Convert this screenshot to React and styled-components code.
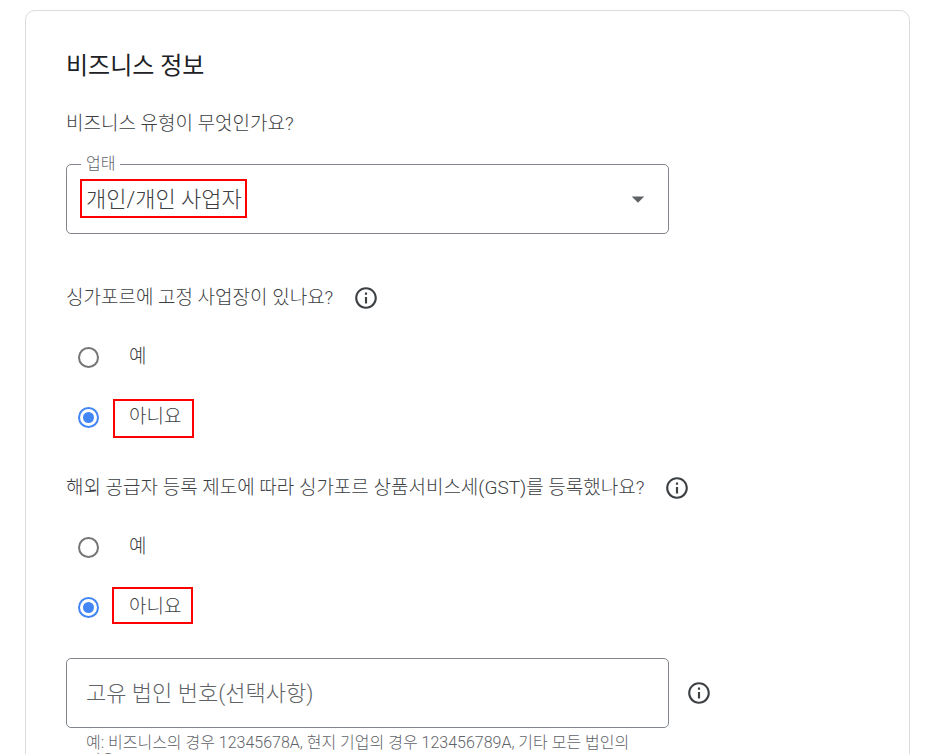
import React, { useState } from "react";
import styled, { createGlobalStyle } from "styled-components";

import { MdArrowDropDown, MdInfoOutline } from "react-icons/md";

const GlobalStyle = createGlobalStyle`
  * {
    box-sizing: border-box;
  }

  body {
    margin: 0;
    background-color: white;
    color: #3c4043;
    font-family: Roboto, "Noto Sans CJK KR Light", "Noto Sans CJK KR", sans-serif;
    font-weight: 350;
    word-break: keep-all;
  }
`;

const Page = styled.main`
  padding: 10px 22px 24px 25px;
`;

const Card = styled.form`
  padding: 37px 40px 40px;
  border: 1px solid #dadce0;
  border-radius: 10px;
`;

const Title = styled.h1`
  margin: 0;
  color: #202124;
  font-family: Roboto, "Noto Sans CJK KR", sans-serif;
  font-size: 24px;
  font-weight: 400;
  line-height: 36px;
`;

const Question = styled.div`
  display: flex;
  align-items: center;
  gap: 20px;
  min-height: 30px;
  font-size: 19px;
  line-height: 30px;
`;

const Intro = styled(Question)`
  margin: 25px 0;
`;

const Group = styled.fieldset`
  min-width: 0;
  margin: ${(props) => props.$space} 0 0;
  padding: 0;
  border: 0;
`;

const Options = styled.div`
  margin-top: 14px;
`;

const InfoButton = styled.button`
  display: flex;
  flex: none;
  padding: 0;
  border: 0;
  background: none;
  color: #3c4043;
  font-size: 26px;
  cursor: pointer;
`;

const Option = styled.label`
  display: flex;
  align-items: center;
  gap: 30px;
  height: 60px;
  padding-left: 12px;
  font-size: 19px;
  line-height: 30px;
  cursor: pointer;
`;

const Radio = styled.input`
  appearance: none;
  flex: none;
  width: 21px;
  height: 21px;
  margin: 0;
  padding: 3px;
  border: 2px solid #757575;
  border-radius: 50%;

  &:checked {
    border-color: #4285f4;
    background: #4285f4 content-box;
  }
`;

const Marked = styled.span`
  position: relative;
`;

const Mark = styled.span`
  position: absolute;
  inset: ${(props) => props.$inset};
  border: 2px solid #ff0000;
  pointer-events: none;
`;

const SelectMark = styled(Mark)`
  width: 167px;
  height: 39px;
`;

const FieldRow = styled.div`
  display: flex;
  align-items: center;
  gap: 17px;
  margin-top: 21px;
`;

const Field = styled.div`
  position: relative;
  width: 603px;
  max-width: 100%;
  height: 70px;
`;

const FloatingLabel = styled.label`
  position: absolute;
  top: -10px;
  left: 15px;
  padding: 0 5px;
  background-color: white;
  color: #5f6368;
  font-size: 16px;
  line-height: 20px;
`;

const Select = styled.select`
  appearance: none;
  width: 100%;
  height: 100%;
  padding: 0 50px 0 19px;
  border: 1px solid #80868b;
  border-radius: 5px;
  background-color: white;
  color: #3c4043;
  font: inherit;
  font-size: 22px;
`;

const Arrow = styled(MdArrowDropDown)`
  position: absolute;
  top: 20px;
  right: 16px;
  color: #5f6368;
  font-size: 30px;
  pointer-events: none;
`;

const TextInput = styled.input`
  width: 100%;
  height: 100%;
  padding: 0 19px;
  border: 1px solid #80868b;
  border-radius: 5px;
  color: #3c4043;
  font: inherit;
  font-size: 22px;

  &::placeholder {
    color: #5f6368;
    opacity: 1;
  }
`;

const Helper = styled.p`
  width: 603px;
  max-width: 100%;
  margin: 6px 0 0;
  padding: 0 20px;
  color: #5f6368;
  font-size: 16px;
  line-height: 18px;
`;

function Info() {
  return (
    <InfoButton type="button" aria-label="자세히 알아보기">
      <MdInfoOutline />
    </InfoButton>
  );
}

function YesNo({ name, question, space, markInset }) {
  const [value, setValue] = useState("no");
  return (
    <Group $space={space} aria-labelledby={`${name}-question`}>
      <Question>
        <span id={`${name}-question`}>{question}</span>
        <Info />
      </Question>
      <Options>
        <Option>
          <Radio type="radio" name={name} checked={value === "yes"} onChange={() => setValue("yes")} />
          <span>예</span>
        </Option>
        <Option>
          <Radio type="radio" name={name} checked={value === "no"} onChange={() => setValue("no")} />
          <Marked>
            아니요
            <Mark $inset={markInset} />
          </Marked>
        </Option>
      </Options>
    </Group>
  );
}

function App() {
  return (
    <Page>
      <GlobalStyle />
      <Card>
        <Title>비즈니스 정보</Title>
        <Intro>비즈니스 유형이 무엇인가요?</Intro>
        <Field>
          <Select id="business-type" defaultValue="individual">
            <option value="individual">개인/개인 사업자</option>
          </Select>
          <FloatingLabel htmlFor="business-type">업태</FloatingLabel>
          <Arrow />
          <SelectMark $inset="15px auto auto 14px" />
        </Field>
        <YesNo
          name="establishment"
          question="싱가포르에 고정 사업장이 있나요?"
          space="49px"
          markInset="-3px -13px -6px -16px"
        />
        <YesNo
          name="gst"
          question="해외 공급자 등록 제도에 따라 싱가포르 상품서비스세(GST)를 등록했나요?"
          space="26px"
          markInset="-5px -12px -2px -17px"
        />
        <FieldRow>
          <Field>
            <TextInput
              id="entity-number"
              aria-label="고유 법인 번호(선택사항)"
              aria-describedby="entity-helper"
              placeholder="고유 법인 번호(선택사항)"
            />
          </Field>
          <Info />
        </FieldRow>
        <Helper id="entity-helper">
          예: 비즈니스의 경우 12345678A, 현지 기업의 경우 123456789A, 기타 모든 법인의 경우
        </Helper>
      </Card>
    </Page>
  );
}

export default App;
